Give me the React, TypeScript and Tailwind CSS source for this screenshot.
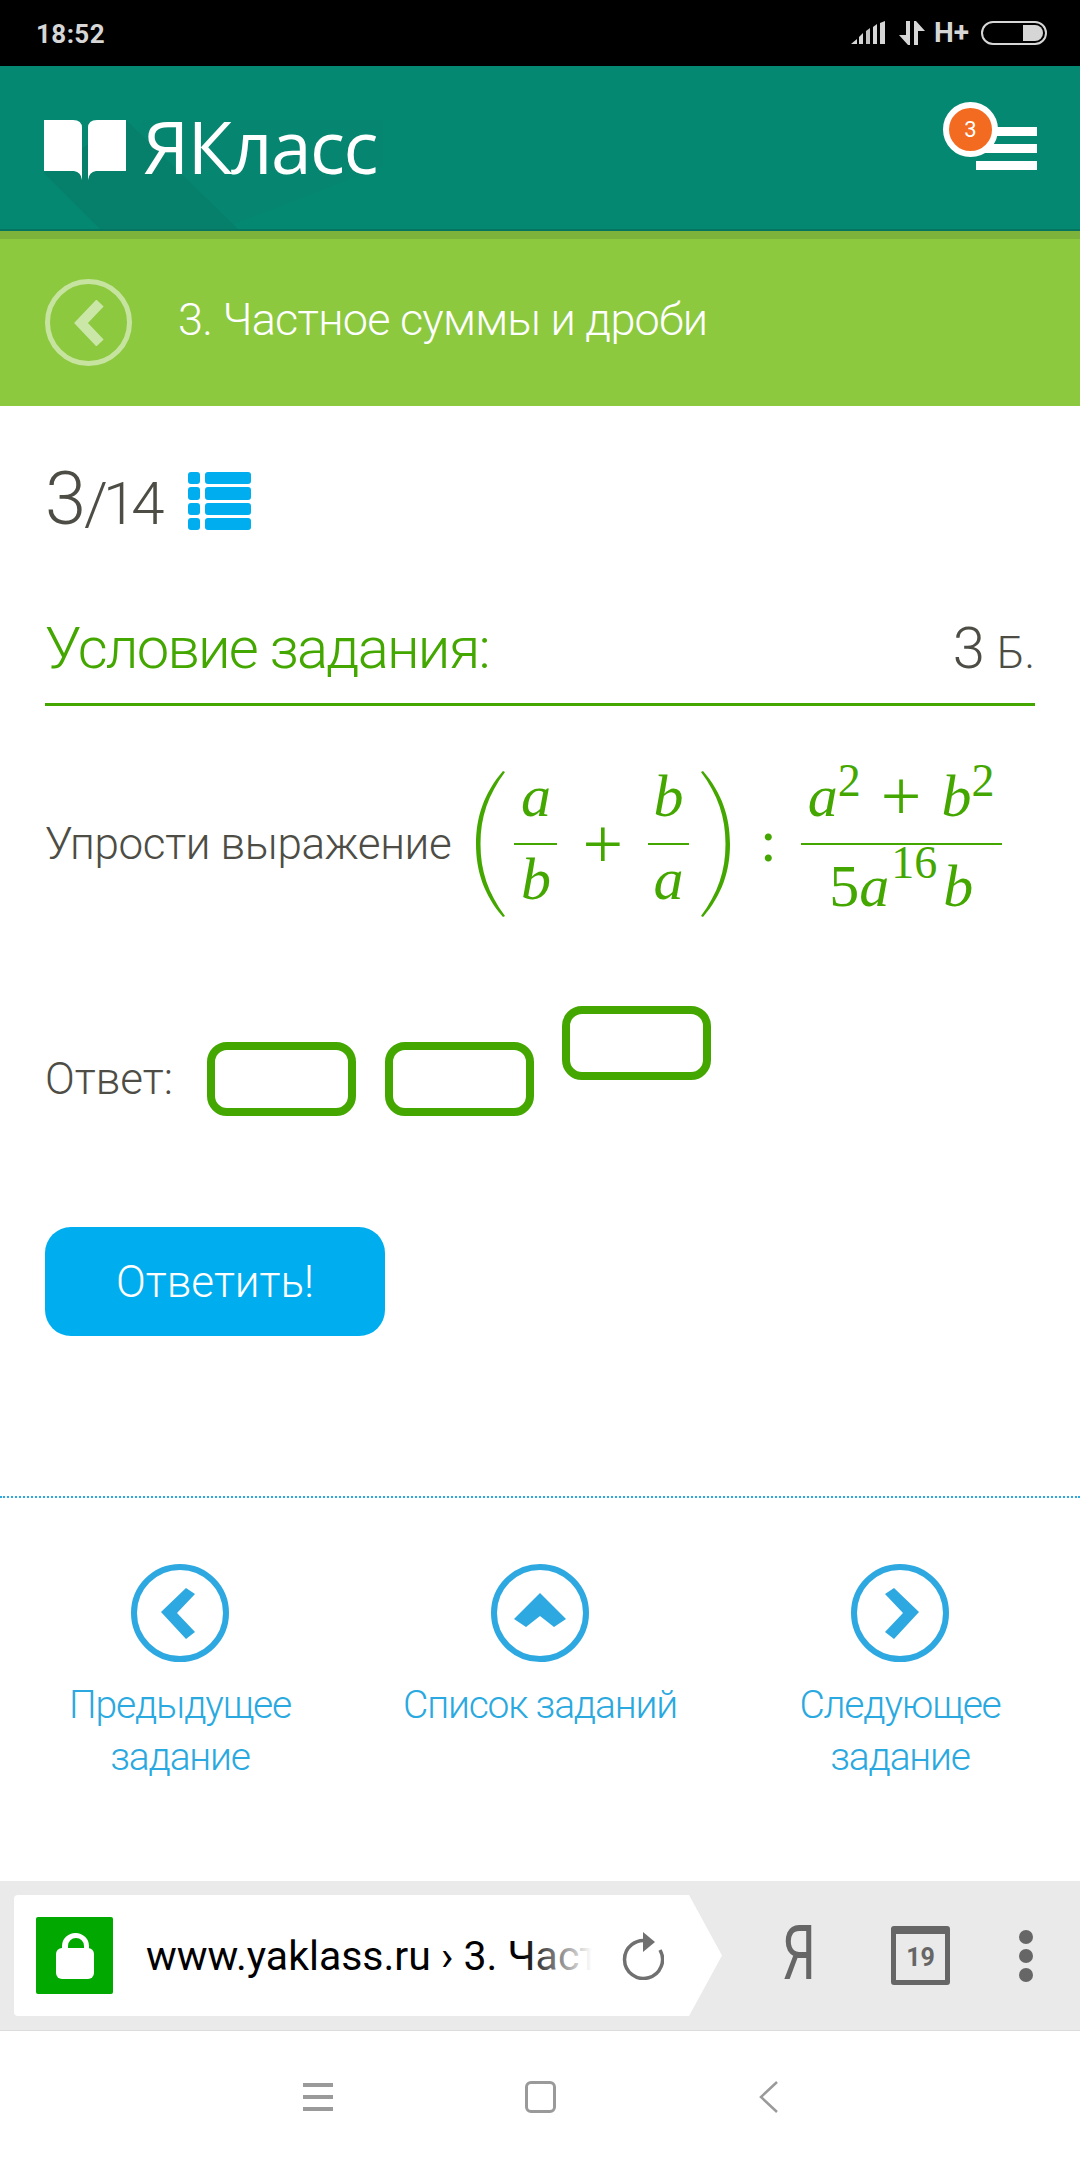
import { Fragment } from 'react';

const navItems = [
  { lines: ['Предыдущее', 'задание'], chevron: 'M24 42 L49 18 L58 24 L40 43 L58 62 L49 69 Z', dir: 'left' },
  { lines: ['Список заданий'], chevron: 'M43 23 L17 49 L29 57 L43 46 L57 57 L69 49 Z', dir: 'up' },
  { lines: ['Следующее', 'задание'], chevron: 'M62 42 L37 18 L28 24 L46 43 L28 62 L37 69 Z', dir: 'right' },
];

function StatusBar() {
  return (
    <div className="h-[66px] shrink-0 bg-black flex items-center pl-[36px] pr-[33px] text-[#d6d6d6]">
      <span className="text-[26px] font-bold leading-none tracking-[0.4px] mt-[2px]">18:52</span>
      <div className="ml-auto flex items-center">
        <svg width="34" height="24" viewBox="0 0 34 24" fill="#d6d6d6">
          <path d="M0 23 L6 18 V23 Z" />
          <path d="M8 16 L12 12 V23 H8 Z" />
          <path d="M15 10 L19 7 V23 H15 Z" opacity="0.9" />
          <path d="M22 6 L26 3 V23 H22 Z" />
          <path d="M29 2 L34 0 V23 H29 Z" />
        </svg>
        <svg className="ml-[14px]" width="26" height="24" viewBox="0 0 26 24" fill="#d6d6d6">
          <path d="M7 0 H11 V24 H9 L0 14 H7 Z" />
          <path d="M15 0 H17 L26 10 H19 V24 H15 Z" />
        </svg>
        <span className="ml-[9px] text-[28px] font-bold leading-none">H+</span>
        <div className="ml-[12px] w-[66px] h-[24px] rounded-full border-2 border-[#d6d6d6] flex justify-end p-[2px]">
          <div className="w-[20px] h-full bg-[#d6d6d6] rounded-r-full" />
        </div>
      </div>
    </div>
  );
}

function Header() {
  return (
    <div className="relative h-[165px] shrink-0 bg-[#058872] border-b-2 border-[#067560] overflow-hidden flex items-start pl-[44px] pr-[43px] pt-[54px]">
      <svg className="absolute left-0 top-0" width="400" height="165" viewBox="0 0 400 165">
        <path d="M143 54 L383 54 L383 100 L215 165 H102 Z" fill="#068570" />
        <path d="M44 107 L102 165 H240 L126 54 Z" fill="#067f6b" />
      </svg>
      <svg className="relative" width="82" height="60" viewBox="0 0 82 60" fill="#fff">
        <path d="M0 0 H29 Q38 0 38 8 V60 Q37 52 30 51 H0 Z" />
        <path d="M82 0 H53 Q44 0 44 8 V60 Q45 52 52 51 H82 Z" />
      </svg>
      <span className="relative ml-[17px] -mt-[20px] [font-family:'Open_Sans',sans-serif] font-normal text-[73px] leading-[92px] tracking-[-1.5px] text-white">ЯКласс</span>
      <div className="relative ml-auto mt-[7px] w-[61px] flex flex-col gap-[8px]">
        <div className="h-[9px] bg-white" />
        <div className="h-[9px] bg-white" />
        <div className="h-[9px] bg-white" />
        <div className="absolute -left-[33px] -top-[25px] w-[55px] h-[55px] rounded-full border-[6px] border-white bg-[#f26b21] flex items-center justify-center text-white text-[22px] leading-none">3</div>
      </div>
    </div>
  );
}

function TopicBar() {
  return (
    <div className="h-[175px] shrink-0 bg-[#8cc93f] border-t-[8px] border-[#7db33b] flex items-center pl-[45px]">
      <div className="w-[87px] h-[87px] rounded-full border-[5px] border-white/50 flex items-center justify-center">
        <svg width="34" height="46" viewBox="0 0 34 46" fill="none" stroke="#fff" strokeOpacity="0.55" strokeWidth="10">
          <path d="M28 3 L9 23 L28 43" />
        </svg>
      </div>
      <span className="ml-[46px] -mt-[6px] text-[45px] font-light text-white leading-none tracking-[-0.75px]">3. Частное суммы и дроби</span>
    </div>
  );
}

function Frac({ top, bottom, bar, low }: { top: React.ReactNode; bottom: React.ReactNode; bar: string; low?: boolean }) {
  return (
    <div className="flex flex-col items-center">
      <div className="h-[70px] pb-[13px] flex items-end justify-center whitespace-nowrap">{top}</div>
      <div className={`h-[2px] my-[4px] bg-[#43a700] ${bar}`} />
      <div className={`h-[70px] flex items-start justify-center whitespace-nowrap ${low ? 'pt-[7px]' : ''}`}>{bottom}</div>
    </div>
  );
}

function Paren({ flip }: { flip?: boolean }) {
  return (
    <svg className={flip ? '-scale-x-100' : ''} width="30" height="146" viewBox="0 0 30 146" fill="#43a700">
      <path d="M28 0 L30 1 C13 24 5.500 46 5.500 73 C5.500 100 13 122 30 145 L28 146 C9 124 1 100 1 73 C1 46 9 22 28 0 Z" />
    </svg>
  );
}

function MathExpr() {
  const v = "[font-family:'Liberation_Serif',serif] italic text-[60px] leading-[60px] text-[#43a700]";
  const n = "[font-family:'Liberation_Serif',serif] text-[60px] leading-[60px] text-[#43a700]";
  const plus = "[font-family:'Liberation_Serif',serif] text-[72px] leading-[60px] text-[#43a700]";
  const supTop = "[font-family:'Liberation_Serif',serif] text-[46px] leading-none text-[#43a700] -translate-y-[22px] inline-block";
  const supBottom = "[font-family:'Liberation_Serif',serif] text-[46px] leading-none text-[#43a700] -translate-y-[16px] inline-block";
  return (
    <div className="ml-[24px] flex items-center">
      <Paren />
      <div className="ml-[9px]">
        <Frac bar="w-[43px]" top={<span className={v}>a</span>} bottom={<span className={v}>b</span>} />
      </div>
      <span className={`${plus} ml-[25px]`}>+</span>
      <div className="ml-[25px]">
        <Frac bar="w-[41px]" top={<span className={v}>b</span>} bottom={<span className={v}>a</span>} />
      </div>
      <div className="ml-[12px]"><Paren flip /></div>
      <span className={`${n} ml-[29px] -mt-[6px]`}>:</span>
      <div className="ml-[24px]">
        <Frac
          bar="w-[201px]"
          top={
            <>
              <span className={v}>a</span>
              <span className={supTop}>2</span>
              <span className={`${plus} mx-[20px]`}>+</span>
              <span className={v}>b</span>
              <span className={supTop}>2</span>
            </>
          }
          low
          bottom={
            <>
              <span className={n}>5</span>
              <span className={v}>a</span>
              <span className={`${supBottom} ml-[2px]`}>16</span>
              <span className={`${v} ml-[6px]`}>b</span>
            </>
          }
        />
      </div>
    </div>
  );
}

function AnswerBox() {
  return <div className="w-[149px] h-[74px] rounded-[20px] border-[8px] border-[#43a700] bg-white" />;
}

function Nav() {
  return (
    <div className="grid grid-cols-3 mt-[66px]">
      {navItems.map((item) => (
        <div key={item.dir} className="flex flex-col items-center">
          <div className="w-[98px] h-[98px] rounded-full border-[6px] border-[#2ea8e0] flex items-center justify-center">
            <svg width="86" height="86" viewBox="0 0 86 86" fill="#2ea8e0">
              <path d={item.chevron} />
            </svg>
          </div>
          <div className="mt-[17px] text-[39px] font-light leading-[52px] tracking-[-1.2px] text-[#29a9e0] text-center">
            {item.lines.map((l) => (
              <Fragment key={l}>
                {l}
                <br />
              </Fragment>
            ))}
          </div>
        </div>
      ))}
    </div>
  );
}

function BrowserBar() {
  return (
    <div className="h-[150px] shrink-0 bg-[#eaeaea] border-b border-[#dcdcdc] flex items-center pl-[14px]">
      <div className="relative w-[708px] h-[121px] bg-white rounded-l-[4px] flex items-center pl-[22px] [clip-path:polygon(0_0,675px_0,708px_50%,675px_100%,0_100%)]">
        <div className="w-[77px] h-[77px] bg-[#00a800] rounded-[2px] flex items-center justify-center">
          <svg width="38" height="46" viewBox="0 0 38 46" fill="#fff">
            <path d="M6 16 V13 A13.500 13 0 0 1 33 13 V16 H28 V13 A8 8 0 0 0 12 13 V16 Z" />
            <rect x="0" y="15" width="38" height="31" rx="6" />
          </svg>
        </div>
        <div className="relative ml-[33px] w-[446px] overflow-hidden whitespace-nowrap text-[41px] text-black leading-[48px]">
          www.yaklass.ru › 3. Частное суммы и дроби
          <div className="absolute right-0 top-0 bottom-0 w-[70px] bg-gradient-to-r from-white/0 to-white" />
        </div>
        <svg className="ml-[30px]" width="42" height="48" viewBox="0 0 42 48" fill="none" stroke="#707070">
          <path d="M26 9 A19 19 0 1 0 38 18" strokeWidth="3.500" />
          <path d="M21 0 L33 10 L21 20 Z" fill="#707070" stroke="none" />
        </svg>
      </div>
      <span className="ml-[60px] w-[55px] text-[76px] leading-none text-[#666] -mt-[6px] scale-x-[0.7] origin-left">Я</span>
      <div className="ml-[54px] w-[59px] h-[59px] rounded-[3px] border-[5px] border-t-[8px] border-[#666] flex items-center justify-center text-[25px] font-bold text-[#666] leading-none">19</div>
      <div className="ml-[69px] flex flex-col gap-[5px]">
        <div className="w-[14px] h-[14px] rounded-full bg-[#666]" />
        <div className="w-[14px] h-[14px] rounded-full bg-[#666]" />
        <div className="w-[14px] h-[14px] rounded-full bg-[#666]" />
      </div>
    </div>
  );
}

function SystemNav() {
  return (
    <div className="flex-1 bg-white relative flex items-center pt-[3px] pl-[303px]">
      <div className="w-[30px] flex flex-col gap-[8px]">
        <div className="h-[4px] bg-[#9a9a9a]" />
        <div className="h-[4px] bg-[#9a9a9a]" />
        <div className="h-[4px] bg-[#9a9a9a]" />
      </div>
      <div className="ml-[192px] w-[31px] h-[32px] rounded-[6px] border-[3px] border-[#9a9a9a]" />
      <svg className="ml-[203px]" width="19" height="32" viewBox="0 0 19 32" fill="none" stroke="#9a9a9a" strokeWidth="2.5">
        <path d="M18 1 L2 16 L18 31" />
      </svg>
    </div>
  );
}

export default function App() {
  return (
    <div className="w-[1080px] h-[2160px] flex flex-col bg-white overflow-hidden [font-family:Roboto,sans-serif]">
      <StatusBar />
      <Header />
      <TopicBar />

      <div className="h-[1475px] shrink-0 bg-white">
        <div className="px-[45px]">
          <div className="mt-[48px] h-[90px] flex items-end text-[#4d4d45] font-light">
            <span className="text-[74px] leading-[90px]">3</span>
            <span className="-ml-[2px] text-[60px] leading-[80px] tracking-[-5px]">/14</span>
            <div className="ml-[29px] mb-[14px] w-[63px] h-[58px] grid grid-cols-[12px_1fr] gap-x-[5px] gap-y-[3px]">
              {[0, 1, 2, 3].map((i) => (
                <Fragment key={i}>
                  <div className="bg-[#00aeef] rounded-[3px]" />
                  <div className="bg-[#00aeef] rounded-[3px]" />
                </Fragment>
              ))}
            </div>
          </div>

          <div className="mt-[68px] pb-[17px] flex items-baseline justify-between border-b-[3px] border-[#43a700] font-light">
            <span className="text-[58px] leading-[72px] tracking-[-1.8px] text-[#43a700]">Условие задания:</span>
            <span className="text-[#4d4d45]">
              <span className="text-[58px] leading-[72px]">3</span>
              <span className="text-[44px] ml-[12px]">Б.</span>
            </span>
          </div>

          <div className="mt-[43px] flex items-center h-[190px]">
            <span className="text-[44px] font-light text-[#4d4d45] tracking-[-0.35px]">Упрости выражение</span>
            <MathExpr />
          </div>

          <div className="mt-[85px] flex items-center h-[110px]">
            <span className="text-[44px] font-light text-[#4d4d45]">Ответ:</span>
            <div className="ml-[34px]"><AnswerBox /></div>
            <div className="ml-[29px]"><AnswerBox /></div>
            <div className="ml-[28px] -mt-[72px]"><AnswerBox /></div>
          </div>

          <div className="mt-[93px] w-[340px] h-[109px] rounded-[26px] bg-[#00aeef] flex items-center justify-center text-[44px] font-light text-white">Ответить!</div>
        </div>

        <div className="mt-[160px] border-t-[2px] border-dotted border-[#2ea8e0]" />
        <Nav />
      </div>

      <BrowserBar />
      <SystemNav />
    </div>
  );
}
